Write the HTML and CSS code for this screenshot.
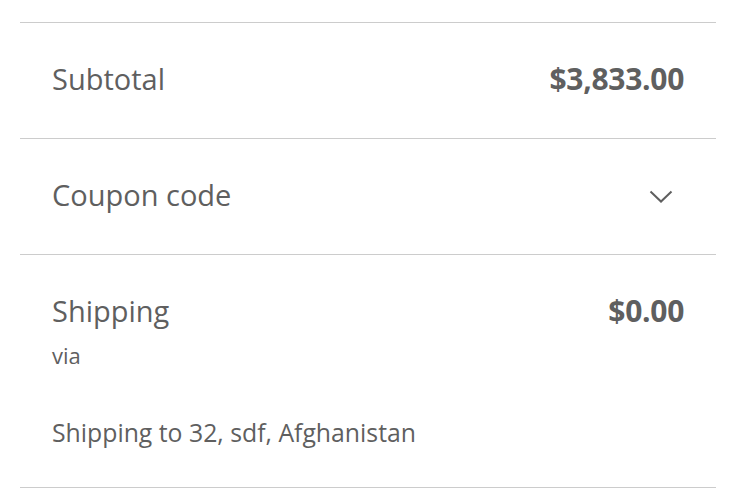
FILE: index.html
```html
<!DOCTYPE html>
<html lang="en">
<head>
<meta charset="utf-8">
<title>Order totals</title>
<link rel="stylesheet" href="styles.css">
</head>
<body>
<div class="totals">
  <div class="row row-center">
    <span class="label">Subtotal</span>
    <span class="value">$3,833.00</span>
  </div>
  <div class="row row-center">
    <span class="label">Coupon code</span>
    <svg class="chevron" width="24" height="14" viewBox="0 0 24 14" aria-hidden="true">
      <path d="M1.5 1.5 L12 11.5 L22.5 1.5" fill="none" stroke="#5f5f5f" stroke-width="2"/>
    </svg>
  </div>
  <div class="row row-shipping">
    <div class="ship-head">
      <span class="label">Shipping</span>
      <span class="value">$0.00</span>
    </div>
    <div class="via">via</div>
    <div class="dest">Shipping to 32, sdf, Afghanistan</div>
  </div>
</div>
</body>
</html>
```

FILE: styles.css
```css
html, body {
  margin: 0;
  padding: 0;
  background: #ffffff;
}

body {
  font-family: "Open Sans", "Noto Sans", sans-serif;
  color: #5f5f5f;
}

.totals {
  margin: 22px 28px 0 20px;
  border-bottom: 1px solid #cccccc;
}

.row {
  border-top: 1px solid #cccccc;
  padding: 0 32px;
}

.row-center {
  height: 116px;
  box-sizing: border-box;
  padding-bottom: 3px;
  display: flex;
  align-items: center;
  justify-content: space-between;
}

.label {
  font-size: 29px;
  line-height: 36px;
}

.value {
  font-size: 30px;
  line-height: 36px;
  font-weight: 700;
  letter-spacing: -0.3px;
}

.chevron {
  margin-right: 11px;
  margin-top: 4px;
  display: block;
}

.row-shipping {
  padding-top: 38px;
  height: 194px;
}

.ship-head {
  display: flex;
  justify-content: space-between;
}

.via {
  font-size: 22px;
  line-height: 28px;
  margin-top: 12px;
}

.dest {
  font-size: 24.8px;
  line-height: 32px;
  margin-top: 47px;
}
```
